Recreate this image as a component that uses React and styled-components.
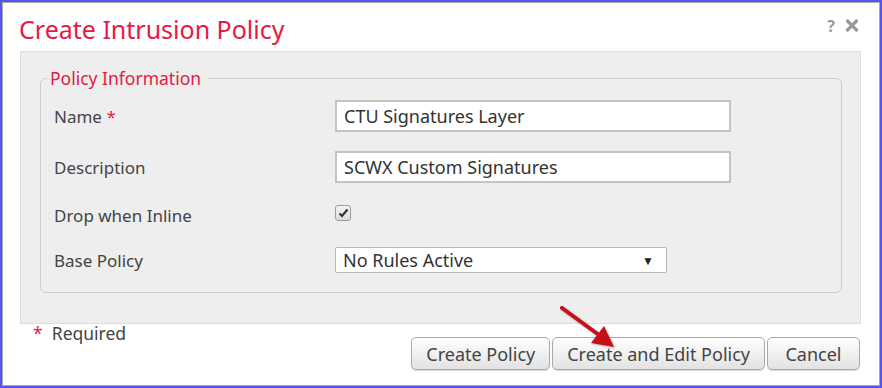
import styled, { createGlobalStyle } from 'styled-components'

const Global = createGlobalStyle`
    html, body {
        margin: 0;
        padding: 0;
        background: #ffffff;
    }
    * {
        box-sizing: border-box;
    }
`;

export default function App (){
    return(
        <>
            <Global />
            <Frame>
                <Dialog>
                    <Header>
                        <Title>Create Intrusion Policy</Title>
                        <Tools>
                            <span>?</span>
                            <svg width="14" height="13" viewBox="0 0 14 13">
                                <path d="M2.5 2 L11.5 11 M11.5 2 L2.5 11" stroke="#9a9a9a" strokeWidth="3.2" strokeLinecap="round" />
                            </svg>
                        </Tools>
                    </Header>
                    <Panel>
                        <Fieldset>
                            <Legend>Policy Information</Legend>
                            <Row height={32}>
                                <Label>Name <Star>*</Star></Label>
                                <TextBox width={396}>CTU Signatures Layer</TextBox>
                            </Row>
                            <Row height={32}>
                                <Label>Description</Label>
                                <TextBox width={396}>SCWX Custom Signatures</TextBox>
                            </Row>
                            <Row height={26}>
                                <Label>Drop when Inline</Label>
                                <Check>
                                    <svg width="11" height="10" viewBox="0 0 11 10">
                                        <path d="M1.5 5.5 L4 8 L9.5 1.5" stroke="#333" strokeWidth="2.2" fill="none" />
                                    </svg>
                                </Check>
                            </Row>
                            <Row height={26}>
                                <Label>Base Policy</Label>
                                <Select>
                                    <span>No Rules Active</span>
                                    <Caret>▼</Caret>
                                </Select>
                            </Row>
                        </Fieldset>
                    </Panel>
                    <Footer>
                        <Required><Star>*</Star>&nbsp; Required</Required>
                        <Buttons>
                            <Button>Create Policy</Button>
                            <Button>Create and Edit Policy</Button>
                            <Button wide>Cancel</Button>
                        </Buttons>
                        <Arrow width="70" height="50" viewBox="0 0 70 50">
                            <path d="M5 3 L42 30" stroke="#c4101c" strokeWidth="4" strokeLinecap="round" />
                            <polygon points="57,42 34,38 47,21" fill="#c4101c" />
                        </Arrow>
                    </Footer>
                </Dialog>
            </Frame>
        </>
    )
}

const Frame = styled.div`
    width: 882px;
    height: 388px;
    border: 2px solid #5656ee;
    background: #ffffff;
`;

const Dialog = styled.div`
    position: relative;
    height: 100%;
    border: 1px solid #a8a8a8;
    background: #ffffff;
    font-family: 'Noto Sans', 'Open Sans', sans-serif;
    color: #444444;
    display: flex;
    flex-direction: column;
`;

const Header = styled.div`
    height: 48px;
    padding: 3px 20px 0 16px;
    display: flex;
    align-items: center;
    justify-content: space-between;
`;

const Title = styled.h1`
    margin: 0;
    font-size: 25px;
    font-weight: 400;
    color: #e41a45;
`;

const Tools = styled.div`
    display: flex;
    align-items: center;
    gap: 10px;
    margin-top: -6px;

    span{
        font-size: 16px;
        font-weight: 700;
        color: #9a9a9a;
    }
`;

const Panel = styled.div`
    margin: 0 18px 0 17px;
    padding: 15px 18px 30px 19px;
    background: #eeeeee;
    border: 1px solid #dddddd;
`;

const Fieldset = styled.fieldset`
    margin: 0;
    padding: 11px 14px 19px 13px;
    border: 1px solid #cccccc;
    border-radius: 6px;
    display: flex;
    flex-direction: column;
    gap: 19px;
`;

const Legend = styled.legend`
    padding: 0 7px 0 3px;
    margin-left: -7px;
    font-size: 17.5px;
    line-height: 22px;
    color: #e41a45;
`;

const Row = styled.div`
    height: ${p => p.height}px;
    display: flex;
    align-items: center;
`;

const Label = styled.div`
    width: 281px;
    font-size: 17px;
    color: #444444;
`;

const Star = styled.span`
    color: #e41a45;
`;

const TextBox = styled.div`
    width: ${p => p.width}px;
    height: 100%;
    padding: 0 7px;
    display: flex;
    align-items: center;
    background: #ffffff;
    border: 2px solid #c4c4c4;
    font-size: 18px;
    color: #333333;
`;

const Check = styled.div`
    width: 16px;
    height: 16px;
    margin-top: -4px;
    border: 1px solid #9c9c9c;
    border-radius: 3px;
    background: linear-gradient(#f4f4f4, #dcdcdc);
    display: flex;
    align-items: center;
    justify-content: center;
`;

const Select = styled.div`
    width: 332px;
    height: 100%;
    padding: 0 12px 0 7px;
    display: flex;
    align-items: center;
    justify-content: space-between;
    background: #ffffff;
    border: 1px solid #b8b8b8;
    border-radius: 2px;
    font-size: 18px;
    color: #333333;
`;

const Caret = styled.span`
    font-size: 12px;
    color: #222222;
`;

const Footer = styled.div`
    position: relative;
    flex: 1;
    padding: 0 19px 0 30px;
    display: flex;
    justify-content: space-between;
    align-items: flex-start;
`;

const Required = styled.div`
    margin-top: -3px;
    font-size: 17.5px;
    color: #444444;
`;

const Buttons = styled.div`
    margin-top: 13px;
    display: flex;
    gap: 2px;
`;

const Button = styled.button`
    height: 33px;
    min-width: ${p => (p.wide ? '93px' : '0')};
    padding: 0 14px;
    font-family: 'Noto Sans', 'Open Sans', sans-serif;
    font-size: 18px;
    color: #444444;
    background: linear-gradient(#ffffff, #e2e2e2);
    border: 1px solid #a9a9a9;
    border-radius: 5px;
    box-shadow: 0 1px 1px rgba(0, 0, 0, 0.15);
`;

const Arrow = styled.svg`
    position: absolute;
    left: 554px;
    top: -19px;
    filter: drop-shadow(1px 1px 1px rgba(0, 0, 0, 0.3));
`;
